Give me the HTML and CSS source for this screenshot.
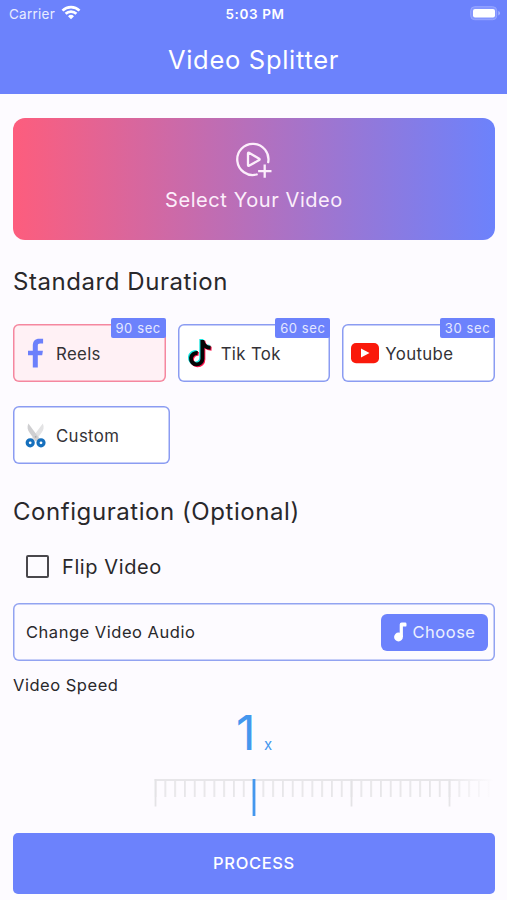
FILE: index.html
```html
<!DOCTYPE html>
<html lang="en">
<head>
<meta charset="utf-8">
<meta name="viewport" content="width=device-width, initial-scale=1">
<title>Video Splitter</title>
<link rel="stylesheet" href="styles.css">
</head>
<body>
<header class="top">
  <div class="status">
    <div class="carrier"><span>Carrier</span>
      <svg width="20" height="15" viewBox="0 0 20 15" fill="none" stroke="#fff" stroke-width="2.7"><path d="M1.5 5.6a12.2 12.2 0 0 1 17 0"/><path d="M4.6 8.8a7.7 7.7 0 0 1 10.8 0"/><path d="M10 14.2 7 11.2a4.4 4.4 0 0 1 6 0z" fill="#fff" stroke="none"/></svg>
    </div>
    <div class="time">5:03 PM</div>
    <svg class="battery" width="31" height="15" viewBox="0 0 31 15"><rect x=".7" y=".7" width="26" height="13" rx="4" fill="#8496ff" stroke="#98a7ff"/><rect x="3" y="3" width="22" height="8.6" rx="2" fill="#fff"/><path d="M28.3 5v4.4q1.7-.6 1.7-2.2T28.3 5z" fill="#a9b6ff"/></svg>
  </div>
  <h1 class="title">Video Splitter</h1>
</header>
<main class="content">
  <button class="select">
    <svg width="38" height="38" viewBox="0 0 38 38" fill="none" stroke="#fceefb" stroke-width="2.3" stroke-linecap="round" stroke-linejoin="round"><path d="M33.2 21.2A15.6 15.6 0 1 0 21.7 33.5"/><path d="M13 12.4v11.6q0 1.2 1 .7l10.2-5.6q.9-.7 0-1.3l-10.2-6.1q-1-.5-1 .7z"/><path d="M29.7 23.5v13.3M23.1 30.1h13.4" stroke-linecap="butt"/></svg>
    <span>Select Your Video</span>
  </button>
  <h2 class="heading heading-duration">Standard Duration</h2>
  <div class="options">
    <div class="option selected"><span class="icon"><svg width="26" height="30" viewBox="0 0 26 30"><path d="M10.8 29.5V17.2H6v-4.4h4.8V7.7c0-4.5 2.2-7 6.5-7h3.8v4.8h-3c-1.7 0-2.3.8-2.3 2.4v4.9h5.1l-.7 4.4h-4.4v12.3z" fill="#6c80fb"/></svg></span><span class="name">Reels</span><b class="badge">90 sec</b></div>
    <div class="option"><span class="icon"><svg width="26" height="30" viewBox="0 0 26 30"><g fill="none" stroke-width="3.9"><path d="M14.8 1v18.6a5.7 5.7 0 1 1-4.7-5.6M14.8 1c.4 4.8 3.2 7.4 8.2 7.7" stroke="#12e4df" transform="translate(-.5 .1)"/><path d="M14.8 1v18.6a5.7 5.7 0 1 1-4.7-5.6M14.8 1c.4 4.8 3.2 7.4 8.2 7.7" stroke="#fb174e" transform="translate(1.6 2)"/><path d="M14.8 1v18.6a5.7 5.7 0 1 1-4.7-5.6M14.8 1c.4 4.8 3.2 7.4 8.2 7.7" stroke="#050505" transform="translate(.6 1.1)"/></g></svg></span><span class="name">Tik Tok</span><b class="badge">60 sec</b></div>
    <div class="option"><span class="icon"><svg width="28" height="30" viewBox="0 0 28 30"><rect y="5" width="28" height="20.3" rx="5" fill="#fa190b"/><path d="M10 10.6v9l8.5-4.5z" fill="#fff"/></svg></span><span class="name">Youtube</span><b class="badge">30 sec</b></div>
  </div>
  <div class="option custom"><span class="icon"><svg width="26" height="30" viewBox="0 0 26 30"><path d="M20.8 3.4c1.6 3.6.8 6.6-1.3 9.4l-6.2 8.4-4.4-1.8z" fill="#e3e3e4"/><path d="M6.4 3.4c-1.6 3.6-.8 6.6 1.2 9.4l6.2 8.4 4.4-1.8z" fill="#cfcfd1"/><circle cx="13.6" cy="16.8" r=".9" fill="#aaa"/><g fill="#fff" stroke="#1670bd" stroke-width="3.2"><circle cx="8.2" cy="22.8" r="3"/><circle cx="19" cy="22.8" r="3"/></g></svg></span><span class="name">Custom</span></div>
  <h2 class="heading heading-config">Configuration (Optional)</h2>
  <label class="flip"><span class="box"></span><span>Flip Video</span></label>
  <div class="audio"><span>Change Video Audio</span>
    <button class="choose"><svg width="14" height="20" viewBox="0 0 14 20" fill="#fff"><circle cx="4.5" cy="15" r="4.4"/><path d="M5.7 15V2.6Q5.7.6 7.7.6h3.5q1.3 0 1.3 1.3v1.5q0 1.2-1.3 1.2H8.9V15z"/></svg><span>Choose</span></button>
  </div>
  <div class="speed-label">Video Speed</div>
  <div class="speed"><span class="value">1</span><span class="unit">x</span></div>
  <svg class="ruler" width="481" height="38" viewBox="13 779 481 38">
    <defs>
      <pattern id="minor" x="154.6" y="779" width="9.8" height="18" patternUnits="userSpaceOnUse"><path d="M0 0h1.8v18H0z" fill="#e7e6e9"/></pattern>
      <linearGradient id="fade"><stop offset=".9" stop-color="#fdfbff" stop-opacity="0"/><stop offset="1" stop-color="#fdfbff"/></linearGradient>
    </defs>
    <path d="M154.6 779H494v2H154.6z" fill="#e7e6e9"/>
    <path d="M154.6 779H494v18H154.6z" fill="url(#minor)"/>
    <path d="M155.5 779v27.5M351.5 779v27.5M449.5 779v27.5" stroke="#e4e3e6" stroke-width="1.8"/>
    <path d="M13 779h481v38H13z" fill="url(#fade)"/>
    <path d="M254 779v37" stroke="#4497ee" stroke-width="2.8"/>
  </svg>
  <button class="process">PROCESS</button>
</main>
</body>
</html>
```
FILE: styles.css
```css
* { box-sizing: border-box; }
body { margin: 0; height: 900px; overflow: hidden; background: #fdfbff; color: #29282b; font-family: Inter, "Liberation Sans", sans-serif; }
h1, h2 { margin: 0; font-weight: 400; }
button { border: 0; padding: 0; color: #fff; font: inherit; }
svg { display: block; flex: none; }

.top { height: 94px; background: #6c82fc; color: #fff; }
.status { display: grid; grid-template-columns: 1fr auto 1fr; align-items: center; height: 27px; padding: 0 6px 0 9px; font-size: 13.5px; }
.carrier { display: flex; align-items: center; gap: 6px; letter-spacing: .25px; color: #e9ecff; }
.carrier svg { margin-top: -2px; }
.time { font-weight: 600; font-size: 13.5px; letter-spacing: .6px; }
.battery { justify-self: end; }
.title { height: 66px; line-height: 66px; text-align: center; font-size: 25.5px; letter-spacing: .7px; }

.content { padding: 24px 12px 0 13px; display: flex; flex-direction: column; }
.select { height: 122px; border-radius: 12px; padding-top: 23px; background: linear-gradient(90deg, #fd5d7d, #6c82fc); display: flex; flex-direction: column; align-items: center; color: #fceefb; font-size: 20px; line-height: 24px; letter-spacing: .57px; gap: 9px; }
.heading { font-size: 24px; line-height: 30px; letter-spacing: .56px; }
.heading-duration { margin-top: 27px; }
.options { display: grid; grid-template-columns: repeat(3, 1fr); gap: 12px; margin-top: 27px; }
.option { position: relative; display: flex; align-items: center; height: 58px; box-shadow: inset 0 0 0 1.5px #8b9cf2; border-radius: 6px; background: #fff; padding-left: 9px; font-size: 16.8px; letter-spacing: .35px; }
.option.selected { background: #fff1f5; box-shadow: inset 0 0 0 1.5px #f5879f; }
.icon { width: 34px; flex: none; }
.name { padding-top: 2px; color: #333236; }
.badge { position: absolute; top: -6px; right: 0; height: 20px; width: 55px; border-radius: 2px; background: #6c82fc; color: #e4e8ff; font-weight: 400; font-size: 13px; line-height: 20px; text-align: center; letter-spacing: .6px; }
.custom { width: 157px; margin-top: 24px; }
.heading-config { margin-top: 33px; }
.flip { display: flex; align-items: center; height: 40px; margin-top: 20px; padding-left: 13px; gap: 13px; font-size: 20px; letter-spacing: .6px; }
.box { width: 23px; height: 23px; margin-top: -1px; border: 2px solid #49474c; border-radius: 2px; }
.audio { display: flex; align-items: center; justify-content: space-between; height: 58px; margin-top: 16px; padding: 0 7px 0 13px; box-shadow: inset 0 0 0 1.5px #92a3f1; border-radius: 6px; font-size: 16.5px; letter-spacing: .52px; }
.choose { display: flex; align-items: center; justify-content: center; gap: 5px; width: 107px; height: 37px; border-radius: 6px; background: #6c82fc; font-size: 16.5px; letter-spacing: .5px; color: #edf0ff; }
.speed-label { margin-top: 14px; font-size: 16.5px; line-height: 20px; letter-spacing: .52px; }
.speed { display: flex; align-items: baseline; height: 60px; margin-top: 8px; padding-left: 223px; color: #4497ee; line-height: 60px; }
.value { font-size: 48px; width: 28px; }
.unit { font-size: 15px; }
.ruler { margin-top: 16px; }
.process { height: 61px; margin-top: 16px; padding-bottom: 1px; border-radius: 5px; background: #6c82fc; font-size: 16.5px; font-weight: 500; letter-spacing: .65px; }
```
